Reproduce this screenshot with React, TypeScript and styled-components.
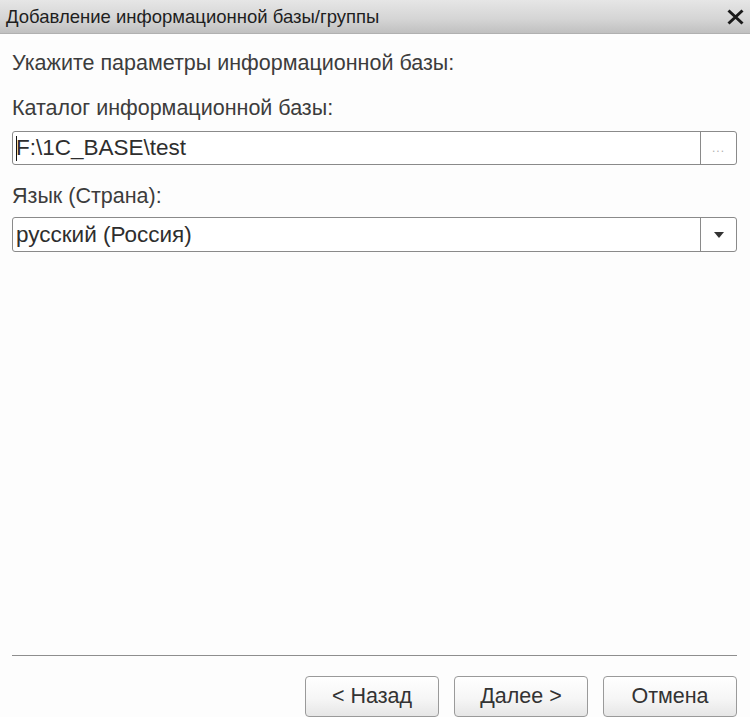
import React from 'react';
import styled, { createGlobalStyle } from 'styled-components';

const GlobalStyle = createGlobalStyle`
  html, body {
    margin: 0;
    padding: 0;
    height: 100%;
    overflow: hidden;
    background: #fdfdfd;
  }
  #root {
    height: 100%;
  }
`;

const Window = styled.div`
  height: 717px;
  display: flex;
  flex-direction: column;
  font-family: "Liberation Sans", Arial, sans-serif;
  color: #3a3a3a;
  overflow: hidden;
`;

const TitleBar = styled.div`
  height: 34px;
  flex: none;
  display: flex;
  align-items: center;
  justify-content: space-between;
  padding: 0 5px 0 6px;
  box-sizing: border-box;
  background: linear-gradient(to bottom, #e6e6e6 0%, #d4d4d4 60%, #c0c0c0 100%);
  border-bottom: 1px solid #b0b0b0;
`;

const TitleText = styled.span`
  font-size: 18.5px;
  color: #1e1e1e;
`;

const CloseButton = styled.button`
  width: 20px;
  height: 20px;
  padding: 0;
  border: none;
  background: transparent;
  display: flex;
  align-items: center;
  justify-content: center;
`;

const Body = styled.div`
  flex: 1;
  display: flex;
  flex-direction: column;
  padding: 0 13px 0 12px;
`;

const Label = styled.div<{ $top: number }>`
  font-size: 21.5px;
  line-height: 24px;
  margin-top: ${({ $top }) => $top}px;
  color: #3c3c3c;
`;

const Field = styled.div<{ $top: number; $height: number }>`
  margin-top: ${({ $top }) => $top}px;
  height: ${({ $height }) => $height}px;
  flex: none;
  display: flex;
  border: 1px solid #8a8a8a;
  border-radius: 3px;
  background: #fff;
  box-sizing: border-box;
`;

const FieldValue = styled.div`
  flex: 1;
  display: flex;
  align-items: center;
  padding-left: 3px;
  font-size: 22.5px;
  color: #2e2e2e;
`;

const Caret = styled.span`
  display: inline-block;
  width: 1px;
  height: 25px;
  background: #111;
  margin-right: -1px;
`;

const FieldButton = styled.div`
  width: 35px;
  flex: none;
  border-left: 1px solid #8a8a8a;
  display: flex;
  align-items: center;
  justify-content: center;
  color: #b0b0b0;
  font-size: 12px;
  letter-spacing: 1px;
`;

const Spacer = styled.div`
  flex: 1;
`;

const Divider = styled.div`
  height: 1px;
  background: #8e8e8e;
  flex: none;
`;

const Footer = styled.div`
  display: flex;
  justify-content: flex-end;
  gap: 15px;
  margin-top: 20px;
  height: 41px;
  flex: none;
`;

const Button = styled.button`
  width: 134px;
  height: 41px;
  border: 1px solid #9a9a9a;
  border-radius: 4px;
  background: linear-gradient(to bottom, #ffffff 0%, #f6f6f6 55%, #e6e6e6 100%);
  font-family: "Liberation Sans", Arial, sans-serif;
  font-size: 21.5px;
  color: #333;
  padding: 0;
`;

export default function App() {
  return (
    <>
      <GlobalStyle />
      <Window>
        <TitleBar>
          <TitleText>Добавление информационной базы/группы</TitleText>
          <CloseButton>
            <svg width="17" height="16" viewBox="0 0 17 16">
              <path d="M1.5 1.5 L15.5 14.5 M15.5 1.5 L1.5 14.5" stroke="#1a1a1a" strokeWidth="3" />
            </svg>
          </CloseButton>
        </TitleBar>
        <Body>
          <Label $top={17}>Укажите параметры информационной базы:</Label>
          <Label $top={21}>Каталог информационной базы:</Label>
          <Field $top={11} $height={34}>
            <FieldValue>
              <Caret />
              F:\1C_BASE\test
            </FieldValue>
            <FieldButton>...</FieldButton>
          </Field>
          <Label $top={19}>Язык (Страна):</Label>
          <Field $top={9} $height={35}>
            <FieldValue>русский (Россия)</FieldValue>
            <FieldButton>
              <svg width="10" height="6" viewBox="0 0 10 6">
                <path d="M0 0 H10 L5 6 Z" fill="#333" />
              </svg>
            </FieldButton>
          </Field>
          <Spacer />
          <Divider />
          <Footer>
            <Button>&lt; Назад</Button>
            <Button>Далее &gt;</Button>
            <Button>Отмена</Button>
          </Footer>
        </Body>
      </Window>
    </>
  );
}
